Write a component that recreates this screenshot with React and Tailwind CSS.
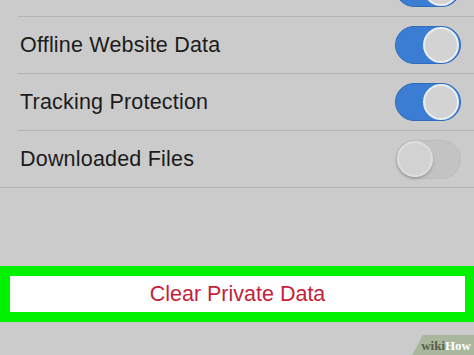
import React from 'react';

const Toggle = ({ on }) => {
  return on ? (
    <div className="w-[66px] h-[38px] rounded-full bg-[#3a7dd2] border border-[#2f6cbb] flex items-center justify-end pr-[1px] shrink-0">
      <div className="w-[36px] h-[36px] rounded-full bg-[#d3d3d3] border-2 border-[#e9eef4]" />
    </div>
  ) : (
    <div className="w-[66px] h-[39px] rounded-full bg-[#c3c3c3] border border-[#bdbdbd] flex items-center justify-start pl-[1px] shrink-0">
      <div className="w-[36px] h-[36px] rounded-full bg-[#d2d2d2] border-2 border-[#dedede] shadow-[0_2px_3px_rgba(0,0,0,0.18)]" />
    </div>
  );
};

const Row = ({ label, on }) => (
  <div className="flex items-center justify-between h-[56px] pl-[20px] pr-[13px]">
    <span className="text-[21.5px] text-[#1b1b1b] tracking-[0.2px]">{label}</span>
    <Toggle on={on} />
  </div>
);

const Divider = ({ full }) => (
  <div className={full ? 'h-[1px] bg-[#b2b2b2]' : 'h-[1px] bg-[#b2b2b2] ml-[18px]'} />
);

const App = () => {
  return (
    <div
      className="w-[474px] h-[355px] bg-[#cbcbcb] overflow-hidden flex flex-col relative"
      style={{ fontFamily: '"Liberation Sans", Arial, sans-serif' }}
    >
      {/* partly scrolled-off row */}
      <div className="h-[16px] overflow-hidden flex items-end justify-end pr-[13px] pb-[9px] shrink-0">
        <Toggle on />
      </div>
      <Divider />
      <Row label="Offline Website Data" on />
      <Divider />
      <Row label="Tracking Protection" on />
      <Divider />
      <Row label="Downloaded Files" on={false} />
      <Divider full />

      <div className="mt-[78px] border-[10px] border-[#00f200] border-r-[9px] h-[56px] shrink-0">
        <button
          type="button"
          className="w-full h-full bg-white flex items-center justify-center text-[21.5px] text-[#c41f3b]"
        >
          Clear Private Data
        </button>
      </div>

      {/* watermark */}
      <div className="absolute right-0 bottom-0 h-[20px] w-[62px] bg-[#a9b79c] [clip-path:polygon(11px_0,100%_0,100%_100%,0_100%)] flex items-center justify-end pr-[3px]">
        <span className="text-[13px] font-bold text-[#56614b] leading-none" style={{ fontFamily: '"Liberation Serif", serif' }}>
          wiki<span className="text-white">How</span>
        </span>
      </div>
    </div>
  );
};

export default App;
